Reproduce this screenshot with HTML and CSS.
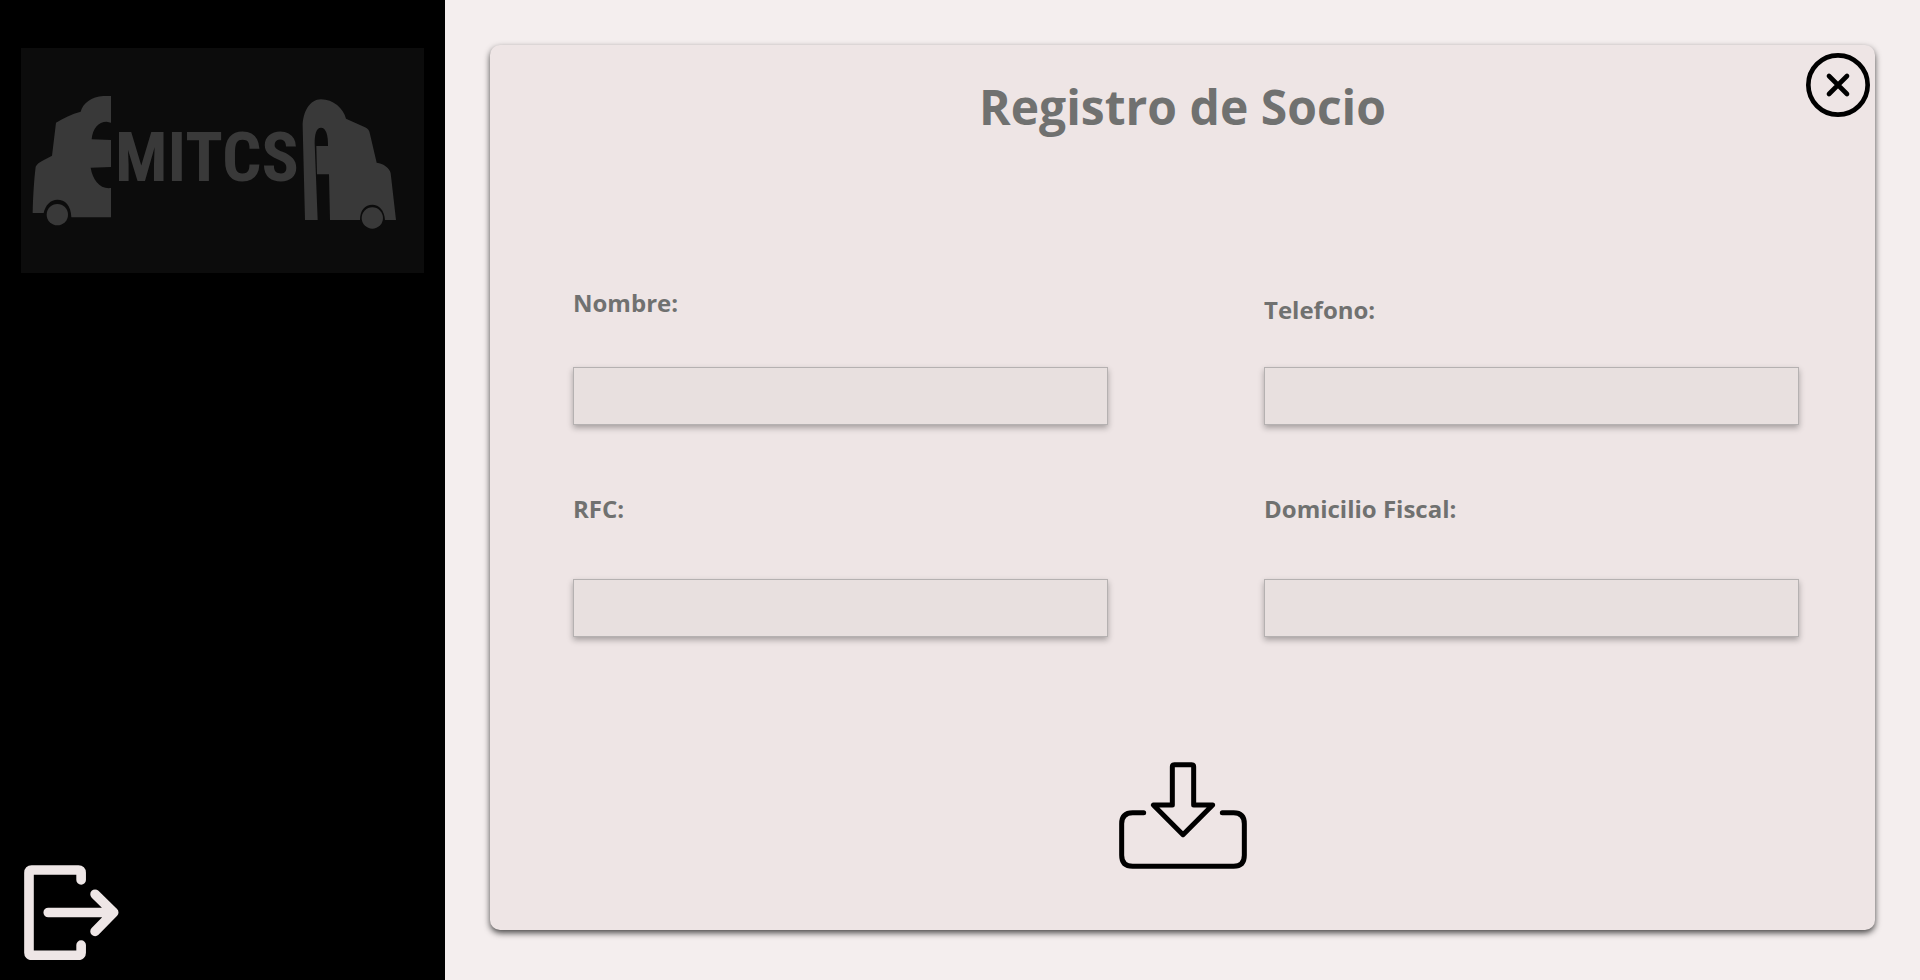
FILE: index.html
```html
<!DOCTYPE html>
<html lang="es">
<head>
<meta charset="utf-8">
<meta name="viewport" content="width=device-width, initial-scale=1">
<title>Registro de Socio</title>
<link rel="stylesheet" href="styles.css">
</head>
<body>
<div class="app">
  <aside class="sidebar">
    <svg class="logo" viewBox="63 54 1209 675" role="img" aria-label="EMITCSA">
      <path d="M333 198H310C275 200 248 220 242 245C215 252 190 264 168 278L156 377C138 388 115 394 107 410C102 450 99 500 98 549H131C136 525 152 509 172 509C195 509 213 525 214 562H333V474C300 478 278 450 272 413L333 411V330L275 328C278 295 295 275 320 275L333 278Z"/>
      <circle cx="172" cy="554" r="32"/>
      <text class="logo-text" x="621" y="454">MITCS</text>
      <path d="M915 570L908 290C908 245 930 208 963 208C1000 208 1030 235 1038 266L1095 292Q1107 298 1109 308L1130 398C1150 400 1170 415 1172 430L1188 570H1155C1153 540 1137 524 1117 524C1095 524 1080 540 1080 570H990L987 433H951L949 348H984C985 315 978 293 963 293C948 293 944 315 944 340L953 570Z"/>
      <circle cx="1117" cy="564" r="32"/>
    </svg>
    <button class="icon-button logout" type="button" aria-label="Salir">
      <svg class="logout-icon" viewBox="72 74 286 286">
        <path d="M244 119V97Q244 89 236 89H95Q87 89 87 97V338Q87 346 95 346H236Q244 346 244 338V315M145 217H338M286 162L342 217L286 274"/>
      </svg>
    </button>
  </aside>
  <main class="main">
    <form class="card">
      <button class="icon-button close" type="button" aria-label="Cerrar">
        <svg class="close-icon" viewBox="108 69 192 192">
          <circle cx="204" cy="165" r="89"/>
          <path d="M177 138L231 192M231 138L177 192"/>
        </svg>
      </button>
      <h1 class="title">Registro de Socio</h1>
      <div class="fields">
        <div class="field">
          <label class="label" for="nombre">Nombre:</label>
          <input class="input" id="nombre" type="text">
        </div>
        <div class="field field-near">
          <label class="label" for="telefono">Telefono:</label>
          <input class="input" id="telefono" type="text">
        </div>
        <div class="field field-far">
          <label class="label" for="rfc">RFC:</label>
          <input class="input" id="rfc" type="text">
        </div>
        <div class="field field-far">
          <label class="label" for="domicilio">Domicilio Fiscal:</label>
          <input class="input" id="domicilio" type="text">
        </div>
      </div>
      <button class="icon-button save" type="submit" aria-label="Guardar">
        <svg class="save-icon" viewBox="57 66 384 321">
          <path d="M131 218H98Q65 218 65 251V346Q65 379 98 379H401Q433 379 433 346V251Q433 218 401 218H367M217 195V80Q217 74 223 74H275Q281 74 281 80V195H338L249 284L160 195Z"/>
        </svg>
      </button>
    </form>
  </main>
</div>
</body>
</html>
```
FILE: styles.css
```css
* {
  box-sizing: border-box;
}

body {
  margin: 0;
  background: #f4eeee;
  color: #707170;
  font-family: "Open Sans", "Noto Sans", sans-serif;
}

.app {
  display: flex;
  min-height: 100vh;
}

.sidebar {
  display: flex;
  flex: 0 0 445px;
  flex-direction: column;
  justify-content: space-between;
  padding: 48px 21px 20px;
  background: #000;
}

.logo {
  display: block;
  width: 100%;
  background: #0c0c0c;
  fill: #393939;
}

.logo-text {
  font-family: "Liberation Sans Narrow", "Roboto Condensed", "DejaVu Sans Condensed", sans-serif;
  font-size: 208px;
  font-weight: 700;
  text-anchor: middle;
}

.icon-button {
  padding: 0;
  border: 0;
  background: none;
  cursor: pointer;
}

.icon-button svg {
  display: block;
  fill: none;
  stroke: #000;
  stroke-linecap: round;
  stroke-linejoin: round;
}

.logout {
  align-self: flex-start;
  margin-left: 3px;
}

.icon-button .logout-icon {
  width: 95px;
  stroke: #eee6e6;
  stroke-width: 29px;
}

.main {
  display: flex;
  flex: 1;
  padding: 45px 45px 50px;
}

.card {
  position: relative;
  display: flex;
  flex: 1;
  flex-direction: column;
  padding: 30px 0 61px;
  border-radius: 10px;
  background: #eee5e5;
  box-shadow: 0 3px 6px rgba(0, 0, 0, 0.7);
}

.close {
  position: absolute;
  top: 8px;
  right: 5px;
}

.close-icon {
  width: 64px;
  stroke-width: 14px;
}

.title {
  margin: 0 0 148px;
  font-size: 48px;
  font-weight: 700;
  line-height: 64px;
  text-align: center;
}

.fields {
  display: grid;
  grid-template-columns: 1fr 1fr;
  gap: 68px 156px;
  align-items: end;
  padding: 0 76px 0 83px;
}

.field {
  display: flex;
  flex-direction: column;
  gap: 48px;
}

.field-near {
  gap: 41px;
}

.field-far {
  gap: 54px;
}

.label {
  font-size: 24px;
  font-weight: 700;
  line-height: 32px;
}

.input {
  width: 100%;
  height: 58px;
  padding: 0 12px;
  border: 1px solid #b5b1b1;
  border-radius: 0;
  background: #e8e0df;
  box-shadow: 0 3px 6px rgba(0, 0, 0, 0.3);
  color: inherit;
  font: inherit;
  font-size: 24px;
}

.save {
  align-self: center;
  margin-top: auto;
}

.save-icon {
  width: 128px;
  stroke-width: 15px;
}
```
